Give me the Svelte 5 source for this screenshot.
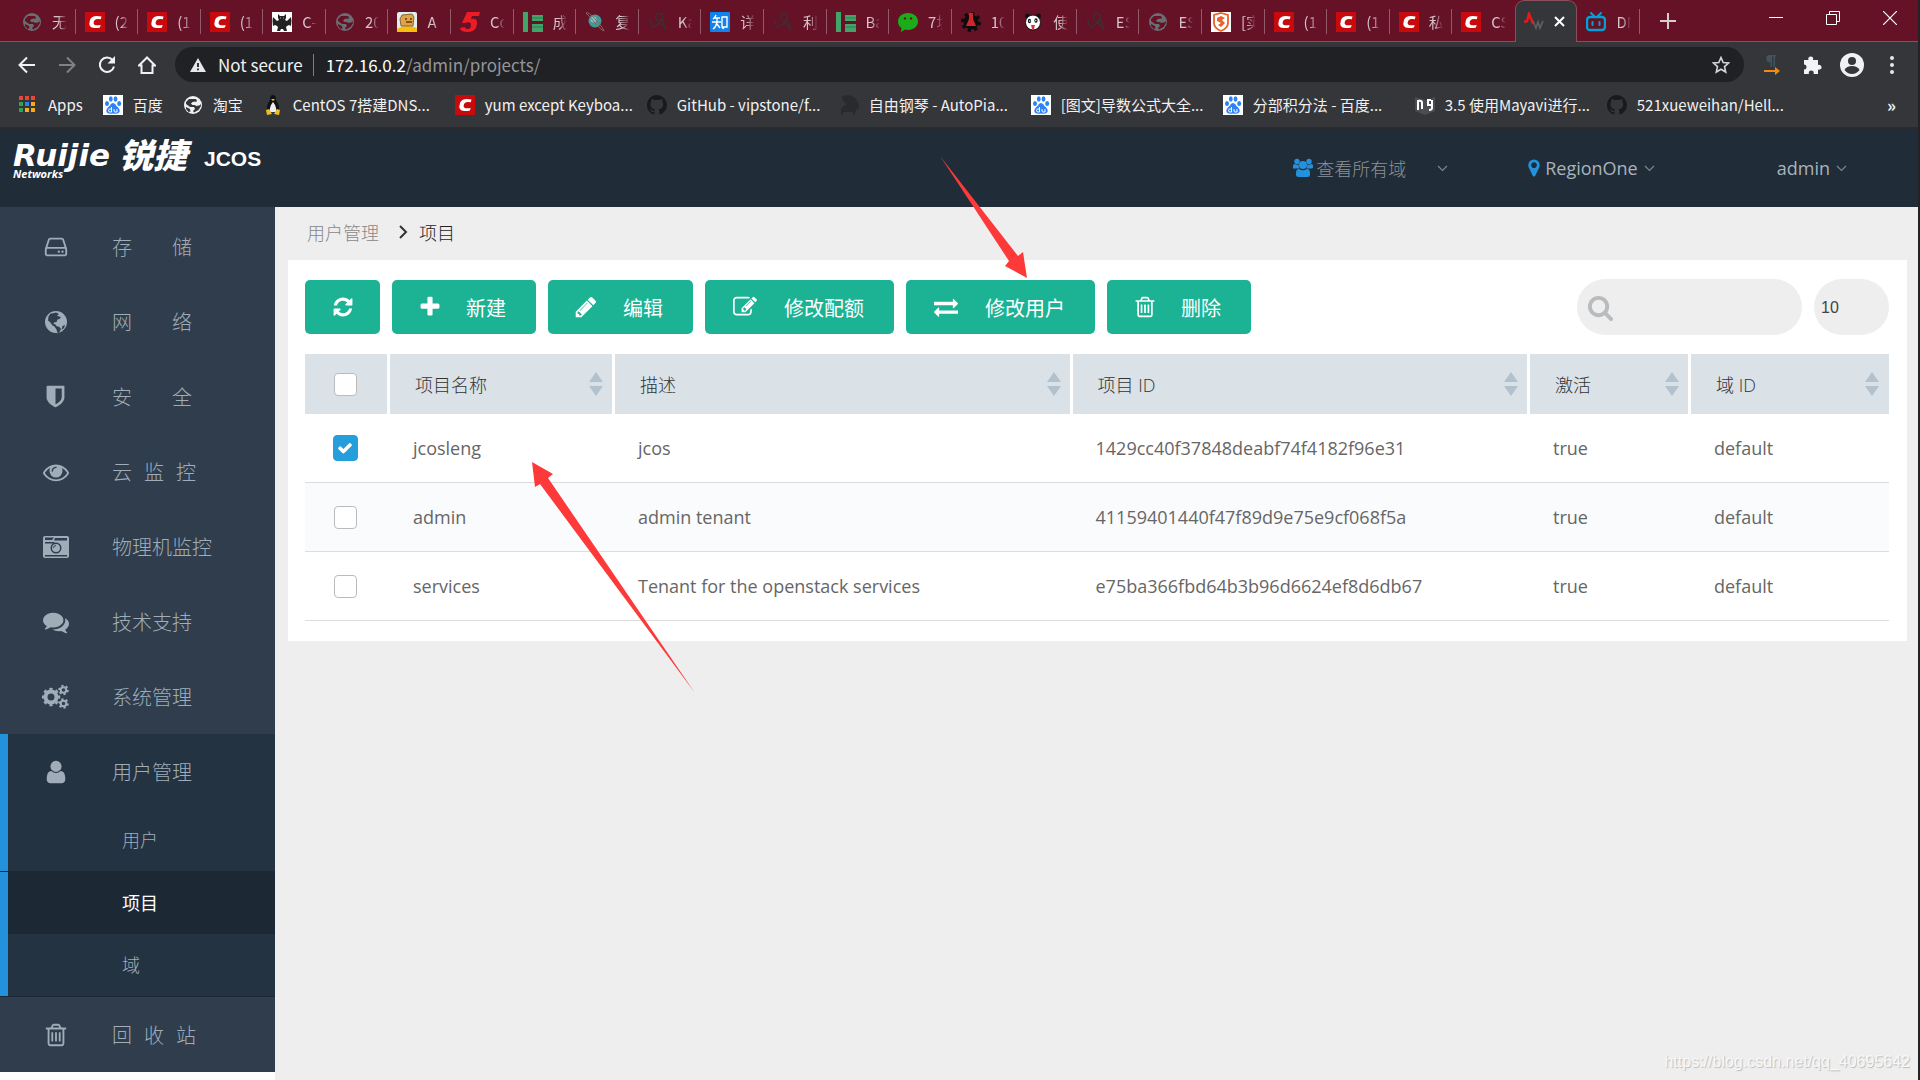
<script>
  const tabs = [
    { icon: 'globe', title: '无标题' },
    { icon: 'csdn', title: '(2条消息)' },
    { icon: 'csdn', title: '(1条消息)' },
    { icon: 'csdn', title: '(1条消息)' },
    { icon: 'bat', title: 'C-免费' },
    { icon: 'globe', title: '2020' },
    { icon: 'robot', title: 'A' },
    { icon: 'five', title: 'Code' },
    { icon: 'bars', title: '成绩' },
    { icon: 'planet', title: '复' },
    { icon: 'sketch', title: 'Kali' },
    { icon: 'zhihu', title: '详解' },
    { icon: 'sketch', title: '利用' },
    { icon: 'bars', title: 'Base' },
    { icon: 'wechat', title: '7块' },
    { icon: 'flask', title: '100' },
    { icon: 'panda', title: '使用' },
    { icon: 'sketch', title: 'ESXi' },
    { icon: 'globe', title: 'ESXi' },
    { icon: 'badge', title: '[实战]' },
    { icon: 'csdn', title: '(1条消息)' },
    { icon: 'csdn', title: '(1条消息)' },
    { icon: 'csdn', title: '私信' },
    { icon: 'csdn', title: 'CSDN' },
    { icon: 'pulse', title: '', active: true },
    { icon: 'bili', title: 'DNS' }
  ];

  const bookmarks = [
    { icon: 'apps', title: 'Apps' },
    { icon: 'baidu', title: '百度' },
    { icon: 'globelight', title: '淘宝' },
    { icon: 'tux', title: 'CentOS 7搭建DNS...', wide: true },
    { icon: 'csdn', title: 'yum except Keyboa...', wide: true },
    { icon: 'github', title: 'GitHub - vipstone/f...', wide: true },
    { icon: 'piano', title: '自由钢琴 - AutoPia...', wide: true },
    { icon: 'baidu', title: '[图文]导数公式大全...', wide: true },
    { icon: 'baidu', title: '分部积分法 - 百度...', wide: true },
    { icon: 'book', title: '3.5 使用Mayavi进行...', wide: true },
    { icon: 'github', title: '521xueweihan/Hell...', wide: true }
  ];

  const menu = [
    { icon: 'hdd', size: 26, label: '存\u2003\u2003储' },
    { icon: 'earth', size: 26, label: '网\u2003\u2003络' },
    { icon: 'shield', size: 25, label: '安\u2003\u2003全' },
    { icon: 'eye', size: 26, label: '云\u2002\u200a监\u2002\u200a控' },
    { icon: 'camera', size: 26, label: '物理机监控' },
    { icon: 'comments', size: 26, label: '技术支持' },
    { icon: 'cogs', size: 27, label: '系统管理' },
    { icon: 'user', size: 26, label: '用户管理', children: ['用户', '项目', '域'] },
    { icon: 'trash', size: 26, label: '回\u2002\u200a收\u2002\u200a站' }
  ];

  const actions = [
    { icon: 'plus', label: '新建', width: 19 },
    { icon: 'pencil', label: '编辑', width: 20 },
    { icon: 'edit', label: '修改配额', width: 24 },
    { icon: 'exchange', label: '修改用户', width: 24 },
    { icon: 'trash', label: '删除', width: 19 }
  ];

  const columns = ['项目名称', '描述', '项目 ID', '激活', '域 ID'];

  let projects = [
    { name: 'jcosleng', desc: 'jcos', id: '1429cc40f37848deabf74f4182f96e31', enabled: 'true', domain: 'default', checked: true },
    { name: 'admin', desc: 'admin tenant', id: '41159401440f47f89d9e75e9cf068f5a', enabled: 'true', domain: 'default', checked: false },
    { name: 'services', desc: 'Tenant for the openstack services', id: 'e75ba366fbd64b3b96d6624ef8d6db67', enabled: 'true', domain: 'default', checked: false }
  ];

  let allChecked = false;
  let search = '';
  let pageSize = '10';
  let current = '项目';

  const toggleAll = () => {
    projects = projects.map((p) => ({ ...p, checked: allChecked }));
  };

  // icons on a 1792 unit grid
  const paths = {
    plus: 'M1600 736v192q0 40-28 68t-68 28h-416v416q0 40-28 68t-68 28h-192q-40 0-68-28t-28-68v-416h-416q-40 0-68-28t-28-68v-192q0-40 28-68t68-28h416v-416q0-40 28-68t68-28h192q40 0 68 28t28 68v416h416q40 0 68 28t28 68z',
    refresh: 'M1639 1056q0 5-1 7-64 268-268 434.5t-478 166.5q-146 0-282.5-55t-243.5-157l-129 129q-19 19-45 19t-45-19-19-45v-448q0-26 19-45t45-19h448q26 0 45 19t19 45-19 45l-137 137q71 66 161 102t187 36q134 0 250-65t186-179q11-17 53-117 8-23 30-23h192q13 0 22.5 9.5t9.5 22.5zm25-800v448q0 26-19 45t-45 19h-448q-26 0-45-19t-19-45 19-45l138-138q-148-137-349-137-134 0-250 65t-186 179q-11 17-53 117-8 23-30 23h-199q-13 0-22.5-9.5t-9.5-22.5v-7q65-268 270-434.5t480-166.5q146 0 284 55.5t245 156.5l130-129q19-19 45-19t45 19 19 45z',
    pencil: 'M491 1536l91-91-235-235-91 91v107h128v128h107zm523-928q0-22-22-22-10 0-17 7l-542 542q-7 7-7 17 0 22 22 22 10 0 17-7l542-542q7-7 7-17zm-54-192l416 416-832 832h-416v-416zm683 96q0 53-37 90l-166 166-416-416 166-165q36-38 90-38 53 0 91 38l235 234q37 39 37 91z',
    edit: 'M888 1184l116-116-152-152-116 116v56h96v96h56zm440-720q-16-16-33 1l-350 350q-17 17-1 33t33-1l350-350q17-17 1-33zm80 594v190q0 119-84.5 203.5t-203.5 84.5h-832q-119 0-203.5-84.5t-84.5-203.5v-832q0-119 84.5-203.5t203.5-84.5h832q63 0 117 25 15 7 18 23 3 17-9 29l-49 49q-14 14-32 8-23-6-45-6h-832q-66 0-113 47t-47 113v832q0 66 47 113t113 47h832q66 0 113-47t47-113v-126q0-13 9-22l64-64q15-15 35-7t20 29zm-96-738l288 288-672 672h-288v-288zm444 132l-92 92-288-288 92-92q28-28 68-28t68 28l152 152q28 28 28 68t-28 68z',
    exchange: 'M1792 1184v192q0 13-9.5 22.5t-22.5 9.5h-1376v192q0 13-9.5 22.5t-22.5 9.5q-12 0-24-10l-319-320q-9-9-9-22 0-14 9-23l320-320q9-9 23-9 13 0 22.5 9.5t9.5 22.5v192h1376q13 0 22.5 9.5t9.5 22.5zm0-544q0 14-9 23l-320 320q-9 9-23 9-13 0-22.5-9.5t-9.5-22.5v-192h-1376q-13 0-22.5-9.5t-9.5-22.5v-192q0-13 9.5-22.5t22.5-9.5h1376v-192q0-14 9-23t23-9q12 0 24 10l319 319q9 9 9 23z',
    trash: 'M704 736v576q0 14-9 23t-23 9h-64q-14 0-23-9t-9-23v-576q0-14 9-23t23-9h64q14 0 23 9t9 23zm256 0v576q0 14-9 23t-23 9h-64q-14 0-23-9t-9-23v-576q0-14 9-23t23-9h64q14 0 23 9t9 23zm256 0v576q0 14-9 23t-23 9h-64q-14 0-23-9t-9-23v-576q0-14 9-23t23-9h64q14 0 23 9t9 23zm128 724v-948h-896v948q0 22 7 40.5t14.5 27 10.5 8.5h832q3 0 10.5-8.5t14.5-27 7-40.5zm-672-1076h448l-48-117q-7-9-17-11h-317q-10 2-17 11zm928 32v64q0 14-9 23t-23 9h-96v948q0 83-47 143.5t-113 60.5h-832q-66 0-113-58.5t-47-141.5v-952h-96q-14 0-23-9t-9-23v-64q0-14 9-23t23-9h309l70-167q15-37 54-63t79-26h320q40 0 79 26t54 63l70 167h309q14 0 23 9t9 23z',
    search: 'M1216 832q0-185-131.5-316.5t-316.5-131.5-316.5 131.5-131.5 316.5 131.5 316.5 316.5 131.5 316.5-131.5 131.5-316.5zm512 832q0 52-38 90t-90 38q-54 0-90-38l-343-342q-179 124-399 124-143 0-273.5-55.5t-225-150-150-225-55.5-273.5 55.5-273.5 150-225 225-150 273.5-55.5 273.5 55.5 225 150 150 225 55.5 273.5q0 220-124 399l343 343q37 37 37 90z',
    check: 'M1671 566q0 40-28 68l-724 724-136 136q-28 28-68 28t-68-28l-136-136-362-362q-28-28-28-68t28-68l136-136q28-28 68-28t68 28l294 295 656-657q28-28 68-28t68 28l136 136q28 28 28 68z',
    hdd: 'M1168 1216q0 33-23.5 56.5t-56.5 23.5-56.5-23.5-23.5-56.5 23.5-56.5 56.5-23.5 56.5 23.5 23.5 56.5zm256 0q0 33-23.5 56.5t-56.5 23.5-56.5-23.5-23.5-56.5 23.5-56.5 56.5-23.5 56.5 23.5 23.5 56.5zm112 160v-320q0-13-9.5-22.5t-22.5-9.5h-1216q-13 0-22.5 9.5t-9.5 22.5v320q0 13 9.5 22.5t22.5 9.5h1216q13 0 22.5-9.5t9.5-22.5zm-1230-480h1180l-157-482q-4-13-16-21.5t-26-8.5h-782q-14 0-26 8.5t-16 21.5zm1358 160v320q0 66-47 113t-113 47h-1216q-66 0-113-47t-47-113v-320q0-25 16-75l197-606q17-53 63-86t101-33h782q55 0 101 33t63 86l197 606q16 50 16 75z',
    shield: 'M1344 960v-640h-448v1137q119-63 213-137 235-184 235-360zm192-768v768q0 86-33.5 170.5t-83 150-118 127.5-126.5 103-121 77.5-89.5 49.5-42.5 20q-12 6-26 6t-26-6q-16-7-42.5-20t-89.5-49.5-121-77.5-126.5-103-118-127.5-83-150-33.5-170.5v-768q0-26 19-45t45-19h1152q26 0 45 19t19 45z',
    eye: 'M1664 960q-152-236-381-353 61 104 61 225 0 185-131.5 316.5t-316.5 131.5-316.5-131.5-131.5-316.5q0-121 61-225-229 117-381 353 133 205 333.5 326.5t434.5 121.5 434.5-121.5 333.5-326.5zm-720-384q0-20-14-34t-34-14q-125 0-214.5 89.5t-89.5 214.5q0 20 14 34t34 14 34-14 14-34q0-86 61-147t147-61q20 0 34-14t14-34zm848 384q0 34-20 69-140 230-376.5 368.5t-499.5 138.5-499.5-139-376.5-368q-20-35-20-69t20-69q140-229 376.5-368t499.5-139 499.5 139 376.5 368q20 35 20 69z',
    comments: 'M1408 768q0 139-94 257t-256.5 186.5-353.5 68.5q-86 0-176-16-124 88-278 128-36 9-86 16h-3q-11 0-20.5-8t-11.5-21q-1-3-1-6.5t.5-6.5 2-6l2.5-5 3.5-5.5 4-5 4.5-5 4-4.5q5-6 23-25t26-29.5 22.5-29 25-38.5 20.5-44q-124-72-195-177t-71-224q0-139 94-257t256.5-186.5 353.5-68.5 353.5 68.5 256.5 186.5 94 257zm384 256q0 120-71 224.5t-195 176.5q10 24 20.5 44t25 38.5 22.5 29 26 29.5 23 25q1 1 4 4.5t4.5 5 4 5 3.5 5.5l2.5 5 2 6 .5 6.5-1 6.5q-3 14-13 22t-22 7q-50-7-86-16-154-40-278-128-90 16-176 16-271 0-472-132 58 4 88 4 161 0 309-45t264-129q125-92 192-212t67-254q0-77-23-152 129 71 204 178t75 230z',
    user: 'M1536 1399q0 109-62.5 187t-150.5 78h-854q-88 0-150.5-78t-62.5-187q0-85 8.5-160.5t31.5-152 58.5-131 94-89 134.5-34.5q131 128 313 128t313-128q76 0 134.5 34.5t94 89 58.5 131 31.5 152 8.5 160.5zm-256-887q0 159-112.5 271.5t-271.5 112.5-271.5-112.5-112.5-271.5 112.5-271.5 271.5-112.5 271.5 112.5 112.5 271.5z',
    marker: 'M1152 640q0-106-75-181t-181-75-181 75-75 181 75 181 181 75 181-75 75-181zm256 0q0 109-33 179l-364 774q-16 33-47.5 52t-67.5 19-67.5-19-46.5-52l-365-774q-33-70-33-179 0-212 150-362t362-150 362 150 150 362z'
  };
</script>

{#snippet icon(name, size)}
  {#if name === 'earth'}
    <svg width={size} height={size} viewBox="0 0 26 26" fill="currentColor" aria-hidden="true">
      <path fill-rule="evenodd" d="M13 2a11 11 0 1 0 0 22a11 11 0 1 0 0-22z M9 4.500l4-1 3 1.500-2 1.500 2 1 2 .5-1.500 2-2 .500-1 2.500-2.500.500-.5 1.500 2 .5 1 1.500 3 1 1.500 2-1.500 3-2 1.500-1-4-2-3-2-1-2.500-3.500-2-1.500.500-4 2-3z M19.500 17l2.500-1-1 3-2.500 2z"/>
    </svg>
  {:else if name === 'camera'}
    <svg width={size} height={size} viewBox="0 0 26 26" fill="currentColor" aria-hidden="true">
      <path fill-rule="evenodd" d="M2 2h22q2 0 2 2v18q0 2-2 2h-22q-2 0-2-2v-18q0-2 2-2z M2 6h7l2-2.500H2z M2 8v1.500h8l2-1.500z M2 21h22v1.500h-22z M24 4h-12l-1 2.500h13z M13 8.500a5.500 5.500 0 1 0 0 11a5.500 5.500 0 1 0 0-11z"/>
      <circle cx="13" cy="14" r="4"/>
      <path d="M10.500 14a2.500 2.500 0 0 1 2.500-2.500" fill="none" stroke="#2f3d4d"/>
    </svg>
  {:else if name === 'cogs'}
    <svg width={size} height={size} viewBox="0 0 27 27" fill="none" stroke="currentColor" aria-hidden="true">
      <circle cx="9" cy="14" r="5.500" stroke-width="4"/>
      <circle cx="9" cy="14" r="8" stroke-width="2.500" pathLength="16" stroke-dasharray="1 1" stroke-dashoffset="0.500"/>
      <circle cx="21.500" cy="7" r="2.800" stroke-width="2"/>
      <circle cx="21.500" cy="7" r="4.400" stroke-width="1.800" pathLength="12" stroke-dasharray="1 1"/>
      <circle cx="21.500" cy="20.500" r="2.800" stroke-width="2"/>
      <circle cx="21.500" cy="20.500" r="4.400" stroke-width="1.800" pathLength="12" stroke-dasharray="1 1"/>
    </svg>
  {:else if name === 'group'}
    <svg width={size} height={size} viewBox="0 0 20 20" fill="currentColor" aria-hidden="true">
      <circle cx="4" cy="3.500" r="2.700"/><circle cx="16" cy="3.500" r="2.700"/>
      <path d="M0 10V8q0-2 1.500-2 3 1.500 4.300.3-.4 2.800.9 4.200H2Q0 11 0 10zM20 10V8q0-2-1.500-2-3 1.500-4.300.3.400 2.800-.9 4.200H18q2 0 2-1z"/>
      <circle cx="10" cy="7" r="4"/>
      <path d="M3 17v-2q0-4 3-4 4 2.500 8 0 3 0 3 4v2q0 2-2.500 2h-9Q3 19 3 17z"/>
    </svg>
  {:else}
    <svg width={size} height={size} viewBox="0 0 1792 1792" fill="currentColor" aria-hidden="true"><path d={paths[name]}/></svg>
  {/if}
{/snippet}

{#snippet favicon(name)}
  <svg class="favicon" width="20" height="20" viewBox="0 0 20 20" aria-hidden="true">
    {#if name === 'globe' || name === 'globelight'}
      <circle cx="10" cy="10" r="9" fill={name === 'globe' ? '#6b6d72' : '#f1f1f1'}/>
      <path d="M8 4h5l1 2-2 2H9.500L8 8.500l1.500 1.500H13l3 .5 1.500-1.500.5 2-2.500 4-4.500 2.500-1-1.500 2-2-1-2H7L3 9V7l3-3z M3 12l4 2 .5 2.500-2 .5L3 14z" fill={name === 'globe' ? '#651126' : '#35363a'}/>
      <path d="M9.500 7l3-.5 1.500 2 3-.5v2l-4 1-2-2H8z" fill={name === 'globe' ? '#6b6d72' : '#f1f1f1'}/>
    {:else if name === 'csdn'}
      <rect width="20" height="20" fill="#c90a0c"/>
      <path d="M16.500 4.500Q7 2.500 5 8q-2.500 8 4.500 8 3 .2 5.500-.6l.6-2.500q-7 1.200-7-2 .3-5 7.200-3.600z" fill="#fff"/>
    {:else if name === 'bat'}
      <rect width="20" height="20" fill="#fff"/>
      <path d="M6 2l2 2h4l2-2v4l-1 2 2 1 4-4q1 4 0 9l-2-1-2 1-1 1 1 4h-3l-1-2h-2l-1 2H5l1-4-1-1-2-1-2 1Q0 9 1 5l4 4 2-1-1-2z" fill="#222"/>
      <path d="M8 5.500h1v1H8zM11 5.500h1v1h-1z" fill="#7c9"/>
    {:else if name === 'robot'}
      <rect width="20" height="20" rx="2" fill="#dff0ef"/>
      <path d="M0 20v-3q4-3 10-3t10 2v4z" fill="#f9bd12"/>
      <path d="M5 3l10-1 2 3-1 9H4L3 7z" fill="#dca548" stroke="#7b4b1d" stroke-width=".8"/>
      <path d="M8 7h2M13 7h2M9 10h6" stroke="#6a3015" stroke-width="1.500"/>
    {:else if name === 'five'}
      <path d="M7 0h13l-1 4h-7l-1 3q7-1 6 5-1 8-9 8-8 0-8-4l5-1q0 2 3 2t3-4-6-2H2z" fill="#ed1c24"/>
    {:else if name === 'bars'}
      <path d="M0 0h5v20H0zM9 3h11v6H9zM9 12h11v8H9z" fill="#42a468"/>
      <path d="M9 6h11M9 15h11" stroke="#2b7f52"/>
    {:else if name === 'planet'}
      <circle cx="10" cy="9" r="6.500" fill="#3f9a9c"/>
      <circle cx="8.500" cy="7.500" r="3" fill="#7cc5c3"/>
      <path d="M1 1q2-2 10 7t8 11q-3-1-8-7T1 1z" fill="none" stroke="#8b6a5d"/>
    {:else if name === 'sketch'}
      <path d="M2 7q0 7 3 8 5-2 8-6 3-5 0-7t-4.500 1 .5 5 5-1l4 11M11 11q5 2 6 6" fill="none" stroke="#412c32" stroke-width="1.600"/>
    {:else if name === 'zhihu'}
      <rect width="20" height="20" rx="1" fill="#1283ea"/>
      <path d="M6 3q-1 3-3 4M4 6h6M7 6v4M2 10h9M7 10q-1 5-4 7M7 12l3 4M12 5h5v10h-3l-1 2v-2h-1z" fill="none" stroke="#fff" stroke-width="1.400"/>
    {:else if name === 'wechat'}
      <path d="M10 1c6 0 10 4 10 8.500S16 18 10 18q-1.500 0-3-.4L3 20l.5-4Q0 13.500 0 9.500C0 5 4 1 10 1z" fill="#1aad19"/>
      <circle cx="7" cy="6.500" r="1.200" fill="#651126"/><circle cx="13" cy="6.500" r="1.200" fill="#651126"/>
    {:else if name === 'flask'}
      <circle cx="10" cy="10" r="7.500" fill="#0c0c0c"/>
      <circle cx="10" cy="10" r="8.500" fill="none" stroke="#0c0c0c" stroke-width="3" pathLength="16" stroke-dasharray="1 1"/>
      <path d="M8 1h4v6l3 7H5l3-7z" fill="#d3242b"/>
    {:else if name === 'panda'}
      <circle cx="4.500" cy="4" r="2.500" fill="#111"/><circle cx="15.500" cy="4" r="2.500" fill="#111"/>
      <circle cx="10" cy="10.500" r="7.500" fill="#fff" stroke="#111"/>
      <ellipse cx="6.500" cy="9" rx="1.600" ry="2.200" fill="#111"/><ellipse cx="13" cy="8.500" rx="1.600" ry="2.200" fill="#111"/>
      <circle cx="6.800" cy="9" r=".7" fill="#fff"/><circle cx="12.800" cy="8.500" r=".7" fill="#fff"/>
      <path d="M8 13h4l-1 4H9z" fill="#e0303a"/>
    {:else if name === 'badge'}
      <rect width="20" height="20" fill="#fff"/>
      <path d="M10 1l7 2v8q0 5-7 8-7-3-7-8V3z" fill="none" stroke="#e8622a" stroke-width="1.800"/>
      <path d="M6 6l4-2 4 2-3 2 3 3-4 4-3-2 3-2-4-2z" fill="#e8622a"/>
    {:else if name === 'pulse'}
      <path d="M0 10l3-1 2-7 3 7 1 3" fill="none" stroke="#e3191b" stroke-width="2.600"/>
      <path d="M9 9l3 7 2-6 2 6 3-7" fill="none" stroke="#5d5e61" stroke-width="1.800"/>
    {:else if name === 'bili'}
      <rect x="1" y="5" width="18" height="13" rx="3" fill="none" stroke="#00a1d6" stroke-width="2.400"/>
      <path d="M5 1l3 3M15 1l-3 3M6.500 10v3M13.500 10v3" stroke="#00a1d6" stroke-width="2" stroke-linecap="round"/>
    {:else if name === 'apps'}
      <path d="M1 1h4v4H1zM7 1h4v4H7zM13 1h4v4h-4z" fill="#e8453c"/>
      <path d="M1 7h4v4H1z" fill="#31a350"/><path d="M7 7h4v4H7z" fill="#2f80ed"/><path d="M13 7h4v4h-4zM13 13h4v4h-4zM7 13h4v4H7z" fill="#f5ab1a"/><path d="M1 13h4v4H1z" fill="#31a350"/>
    {:else if name === 'baidu'}
      <rect width="20" height="20" fill="#fff"/>
      <g fill="#2c83f6"><ellipse cx="4" cy="8.500" rx="2" ry="2.600"/><ellipse cx="7.800" cy="4" rx="1.900" ry="2.700"/><ellipse cx="12.500" cy="4" rx="1.900" ry="2.700"/><ellipse cx="16.200" cy="8.500" rx="2" ry="2.600"/><path d="M10 8q2 0 3.500 3 4 3 3 6-1 2.500-6.500 1.500-5.500 1-6.500-1.500-1-3 3-6Q8 8 10 8z"/></g>
      <path d="M8.500 12v5H7q-1.500-.2-1.500-1.500T7 14h1.500M11 14v2q0 1 1 1h2v-3" fill="none" stroke="#fff"/>
    {:else if name === 'tux'}
      <path d="M10 0q3 0 3 5 4 6 3 11H4Q3 11 7 5q0-5 3-5z" fill="#111"/>
      <path d="M10 7q4 5 3 10H7Q6 12 10 7z" fill="#eee"/>
      <path d="M8 4h4l-2 2zM3 15l3-1 3 5-5 1zM17 15l-3-1-3 5 5 1z" fill="#f3bf1b"/>
    {:else if name === 'github'}
      <path d="M10 0a10 10 0 0 0-3.200 19.500c.5.100.7-.2.700-.5v-1.900c-2.800.6-3.400-1.200-3.400-1.200-.4-1.100-1.100-1.500-1.100-1.500-.9-.6.1-.6.1-.6 1 .1 1.500 1 1.500 1 .9 1.500 2.300 1.100 2.900.8.100-.6.400-1.100.6-1.300-2.200-.3-4.600-1.100-4.600-5 0-1.100.4-2 1-2.700-.1-.2-.4-1.200.1-2.600 0 0 .8-.3 2.800 1a9.500 9.500 0 0 1 5 0c1.900-1.300 2.700-1 2.700-1 .6 1.400.2 2.400.1 2.600.7.700 1 1.600 1 2.700 0 3.900-2.300 4.700-4.600 5 .4.300.7.900.7 1.900V19c0 .3.200.6.700.5A10 10 0 0 0 10 0z" fill="#191a1c"/>
    {:else if name === 'piano'}
      <path d="M3 1q9-2 13 2t4 10q-2 2-7 2h4v2H2v-2q0-3 6-6-4-1-5-8zM2 17h2v3H2zM14 17h2v3h-2z" fill="#292a2d"/>
    {:else if name === 'book'}
      <path d="M0 2l10 3 10-3v14l-10 4-10-4z" fill="#4b4c50"/>
      <path d="M3 15V6q4-1 4 2v6M17 5v8q0 2-3 2M16 5h-3v5h3" fill="none" stroke="#fff" stroke-width="2"/>
    {/if}
  </svg>
{/snippet}

{#snippet chevron()}
  <svg class="chevron" width="11" height="7" viewBox="0 0 11 7" fill="none" stroke="currentColor" stroke-width="1.200" aria-hidden="true"><path d="M1 1l4.500 4.500L10 1"/></svg>
{/snippet}

<div class="screen">
  <div class="browser">
    <div class="tabstrip">
      <div class="tabs">
        {#each tabs as tab, i}
          <div class="tab" class:active={tab.active} class:before={tabs[i + 1]?.active}>
            {@render favicon(tab.icon)}
            {#if tab.active}
              <button class="close" aria-label="Close tab">
                <svg width="11" height="11" viewBox="0 0 11 11" stroke="#fff" stroke-width="2"><path d="M1 1l9 9M10 1l-9 9"/></svg>
              </button>
            {:else}
              <span class="tab-title">{tab.title}</span>
            {/if}
          </div>
        {/each}
      </div>
      <button class="newtab" aria-label="New tab">
        <svg width="16" height="16" viewBox="0 0 16 16" stroke="#d9cbd0" stroke-width="2"><path d="M8 0v16M0 8h16"/></svg>
      </button>
      <div class="window-buttons">
        <button aria-label="Minimize"><svg width="14" height="14" viewBox="0 0 14 14" stroke="#fff"><path d="M0 6.500h14"/></svg></button>
        <button aria-label="Restore"><svg width="14" height="14" viewBox="0 0 14 14" fill="none" stroke="#fff"><path d="M.5 3.500h10v10H.5zM3.500 3V.5h10v10H11"/></svg></button>
        <button aria-label="Close"><svg width="14" height="14" viewBox="0 0 14 14" stroke="#fff" stroke-width="1.200"><path d="M0 0l14 14M14 0L0 14"/></svg></button>
      </div>
    </div>

    <div class="toolbar">
      <button class="tool" aria-label="Back"><svg width="18" height="18" viewBox="0 0 18 18" fill="none" stroke="#f1f1f1" stroke-width="2"><path d="M17 9H2M9 1.500L1.500 9 9 16.500"/></svg></button>
      <button class="tool" aria-label="Forward"><svg width="18" height="18" viewBox="0 0 18 18" fill="none" stroke="#808185" stroke-width="2"><path d="M1 9h15M9 1.500L16.500 9 9 16.500"/></svg></button>
      <button class="tool" aria-label="Reload"><svg width="18" height="18" viewBox="0 0 18 18" fill="none" stroke="#f1f1f1" stroke-width="2"><path d="M16 10.500A7.200 7.200 0 1 1 14.500 4"/><path d="M17 0v7.500H9.500z" fill="#f1f1f1" stroke="none"/></svg></button>
      <button class="tool" aria-label="Home"><svg width="18" height="18" viewBox="0 0 18 18" fill="none" stroke="#f1f1f1" stroke-width="2"><path d="M9 1.500L1 9.500h2.500V17h11V9.500H17z"/></svg></button>
      <div class="omnibox">
        <svg width="16" height="14" viewBox="0 0 16 14" aria-hidden="true"><path d="M8 0l8 14H0z" fill="#e8e8e8"/><path d="M8 5v4M8 10.500v1.800" stroke="#202124" stroke-width="1.800"/></svg>
        <span class="secure">Not secure</span>
        <span class="url">172.16.0.2<span class="path">/admin/projects/</span></span>
        <button class="star" aria-label="Bookmark this page"><svg width="18" height="18" viewBox="0 0 18 18" fill="none" stroke="#d5d6d8" stroke-width="1.600"><path d="M9 1.500l2.200 5 5.300.5-4 3.600 1.200 5.400L9 13.200 4.300 16l1.200-5.400-4-3.600 5.300-.5z"/></svg></button>
      </div>
      <button class="tool" aria-label="Extension"><svg width="18" height="20" viewBox="0 0 18 20"><path d="M6 0h7v1.500h-1V12h-1.500V1.500H9V12H7.500V7A3.500 3.500 0 0 1 6 0z" fill="#40545e"/><path d="M1 16h12" stroke="#f28b0c" stroke-width="2"/><path d="M12 12l5 4-5 4z" fill="#f28b0c"/></svg></button>
      <button class="tool" aria-label="Extensions"><svg width="20" height="20" viewBox="0 0 20 20"><path d="M2 5h4.500a2.500 2.500 0 1 1 4.500 0H16v5a2.500 2.500 0 1 1 0 4.500V19h-4.500a2.500 2.500 0 1 0-4.500 0H2v-4.500a2.500 2.500 0 1 0 0-5z" fill="#f1f3f4"/></svg></button>
      <button class="tool" aria-label="Profile"><svg width="24" height="24" viewBox="0 0 24 24"><circle cx="12" cy="12" r="12" fill="#eff1f3"/><circle cx="12" cy="8" r="4" fill="#35363a"/><path d="M4.500 17q2-4 7.500-4t7.500 4q-3 4-7.500 4t-7.500-4z" fill="#35363a"/></svg></button>
      <button class="tool" aria-label="Menu"><svg width="4" height="18" viewBox="0 0 4 18" fill="#e8e8e8"><circle cx="2" cy="2" r="2"/><circle cx="2" cy="9" r="2"/><circle cx="2" cy="16" r="2"/></svg></button>
    </div>

    <div class="bookmarks">
      {#each bookmarks as mark}
        <a class="bookmark" class:wide={mark.wide} href="#bookmark">{@render favicon(mark.icon)}<span>{mark.title}</span></a>
      {/each}
      <button class="more" aria-label="More bookmarks">»</button>
    </div>
  </div>

  <header class="topbar">
    <div class="brand">
      <div class="logo">
        <div class="logo-words"><span class="ruijie">Ruijie</span><span class="cn">锐捷</span></div>
        <div class="networks">Networks</div>
      </div>
      <span class="product">JCOS</span>
    </div>
    <nav class="top-menus">
      <button class="top-menu domains"><span class="blue">{@render icon('group', 20)}</span><span class="grey">查看所有域</span>{@render chevron()}</button>
      <button class="top-menu region"><span class="blue">{@render icon('marker', 20)}</span><span>RegionOne</span>{@render chevron()}</button>
      <button class="top-menu"><span>admin</span>{@render chevron()}</button>
    </nav>
  </header>

  <div class="layout">
    <aside class="side">
      <ul class="menu">
        {#each menu as item}
          <li class:open={item.children}>
            <a class="item" href="#menu"><span class="item-icon">{@render icon(item.icon, item.size)}</span><span>{item.label}</span></a>
            {#if item.children}
              <ul class="submenu">
                {#each item.children as child}
                  <li class:current={child === current}><a class="subitem" href="#submenu">{child}</a></li>
                {/each}
              </ul>
            {/if}
          </li>
        {/each}
      </ul>
    </aside>

    <main>
      <div class="crumbs">
        <a href="#users">用户管理</a>
        <svg width="9" height="14" viewBox="0 0 9 14" fill="none" stroke="#333" stroke-width="2" aria-hidden="true"><path d="M1 1l6 6-6 6"/></svg>
        <span>项目</span>
      </div>

      <section class="panel">
        <div class="actions">
          <button class="btn refresh" aria-label="刷新">{@render icon('refresh', 22)}</button>
          {#each actions as action}
            <button class="btn">
              <span class="btn-icon" style="width: {action.width}px">{@render icon(action.icon, 24)}</span>
              <span>{action.label}</span>
            </button>
          {/each}
          <label class="search">
            {@render icon('search', 27)}
            <input type="text" aria-label="搜索" bind:value={search} />
          </label>
          <select aria-label="每页数量" bind:value={pageSize}>
            <option>10</option>
            <option>20</option>
            <option>50</option>
          </select>
        </div>

        <table>
          <colgroup>
            <col class="c-check" /><col class="c-name" /><col /><col /><col class="c-enabled" /><col class="c-domain" />
          </colgroup>
          <thead>
            <tr>
              <th class="check-cell">
                <label class="check"><input type="checkbox" aria-label="全选" bind:checked={allChecked} on:change={toggleAll} />{@render icon('check', 16)}</label>
              </th>
              {#each columns as column}
                <th>
                  <div class="th">
                    <span>{column}</span>
                    <svg width="14" height="24" viewBox="0 0 14 24" fill="#b1c2ce" aria-hidden="true"><path d="M7 0l7 10H0zM7 24l7-10H0z"/></svg>
                  </div>
                </th>
              {/each}
            </tr>
          </thead>
          <tbody>
            {#each projects as project}
              <tr>
                <td class="check-cell">
                  <label class="check"><input type="checkbox" aria-label={project.name} bind:checked={project.checked} />{@render icon('check', 16)}</label>
                </td>
                <td>{project.name}</td>
                <td>{project.desc}</td>
                <td>{project.id}</td>
                <td>{project.enabled}</td>
                <td>{project.domain}</td>
              </tr>
            {/each}
          </tbody>
        </table>
      </section>
    </main>
  </div>

  <!-- red pointers drawn over the page -->
  <svg class="pointer to-button" width="90" height="124" viewBox="0 0 90 124" aria-hidden="true"><path d="M0 0L69 105 65 110 87 122 83 96 78 100z" fill="#fd3a39"/></svg>
  <svg class="pointer to-row" width="164" height="232" viewBox="0 0 164 232" aria-hidden="true"><path d="M0 0L21 12 16 16 163 231 8 22 3 25z" fill="#fd3a39"/></svg>
  <div class="watermark">https://blog.csdn.net/qq_40695642</div>
</div>

<style>
  :global(body) {
    margin: 0;
    background: #fff;
  }

  .screen {
    position: relative;
    display: flex;
    flex-direction: column;
    box-sizing: border-box;
    min-height: 100vh;
    border-right: 2px solid #222326;
    font-family: "Open Sans", "Noto Sans CJK SC", sans-serif;
    font-size: 17px;
    overflow: hidden;
  }

  button {
    display: flex;
    align-items: center;
    justify-content: center;
    padding: 0;
    border: 0;
    background: none;
    color: inherit;
    font: inherit;
  }

  a {
    color: inherit;
    text-decoration: none;
  }

  svg {
    display: block;
    flex: none;
  }

  ul {
    margin: 0;
    padding: 0;
    list-style: none;
  }

  /* browser */
  .browser {
    background: #35363a;
    border-bottom: 2px solid #2a2b2f;
    color: #f1f1f1;
    font-family: "Noto Sans CJK SC", sans-serif;
  }

  .tabstrip {
    display: flex;
    height: 41px;
    padding-left: 13px;
    background: #651126;
    border-bottom: 1px solid #8c4d5e;
  }

  .tabs {
    display: flex;
    flex: 1;
    min-width: 0;
  }

  .tab {
    display: flex;
    flex: 1 1 0;
    align-items: center;
    gap: 10px;
    min-width: 0;
    height: 25px;
    margin-top: 9px;
    padding: 0 8px 0 9px;
    box-sizing: border-box;
    border-right: 1px solid #935a68;
    font-size: 15px;
    line-height: 22px;
    color: #d5c5ca;
  }

  .tab.before {
    border-right-color: transparent;
  }

  .tab.active {
    height: 42px;
    margin-top: 0;
    padding: 0 8px;
    border: 1px solid #8c4d5e;
    border-bottom: 0;
    border-radius: 9px 9px 0 0;
    background: #35363a;
  }

  .tab-title {
    flex: 1;
    min-width: 0;
    overflow: hidden;
    white-space: nowrap;
    mask-image: linear-gradient(90deg, #000 40%, transparent);
  }

  .newtab {
    width: 55px;
  }

  .window-buttons {
    display: flex;
    height: 36px;
    padding-left: 52px;
  }

  .window-buttons button {
    width: 57px;
  }

  .toolbar {
    display: flex;
    align-items: center;
    height: 35px;
    padding: 5px 6px 0 7px;
  }

  .tool {
    width: 40px;
    height: 35px;
  }

  .omnibox {
    display: flex;
    flex: 1;
    align-items: center;
    height: 35px;
    margin: 0 8px;
    padding: 0 14px 0 15px;
    border-radius: 18px;
    background: #202124;
    line-height: 22px;
  }

  .secure {
    margin-left: 12px;
    padding-right: 10px;
    border-right: 1px solid #7c7d81;
  }

  .url {
    flex: 1;
    margin-left: 12px;
    color: #fff;
  }

  .path {
    color: #94969a;
  }

  .bookmarks {
    display: flex;
    align-items: center;
    gap: 20px;
    height: 45px;
    padding: 0 22px 0 18px;
    font-size: 15px;
    line-height: 22px;
  }

  .bookmark {
    display: flex;
    align-items: center;
    gap: 10px;
    white-space: nowrap;
  }

  .bookmark.wide {
    width: 172px;
  }

  .more {
    margin-left: auto;
    font-size: 17px;
    font-weight: 700;
  }

  /* top bar */
  .topbar {
    display: flex;
    justify-content: space-between;
    height: 78px;
    background: #202c37;
    color: #a9b3bd;
  }

  .brand {
    display: flex;
    padding: 14px 0 0 13px;
    color: #fff;
    font-style: italic;
    font-weight: 700;
  }

  .logo-words {
    display: flex;
    align-items: center;
    height: 25px;
    line-height: 25px;
  }

  .ruijie {
    width: 106px;
    font-family: "DejaVu Sans", sans-serif;
    font-size: 31px;
  }

  .cn {
    font-size: 34px;
    font-weight: 900;
  }

  .networks {
    font-size: 11px;
    line-height: 12px;
  }

  .product {
    margin-left: 17px;
    font-family: "Liberation Sans", sans-serif;
    font-size: 21px;
    font-style: normal;
    line-height: 32px;
  }

  .top-menus {
    display: flex;
    align-items: center;
    padding-right: 71px;
  }

  .top-menu {
    gap: 6px;
    font-size: 18px;
  }

  .chevron {
    color: #7d8790;
  }

  .domains {
    gap: 3px;
    margin-right: 76px;
  }

  .domains .grey {
    margin-right: 28px;
    color: #8d9195;
    font-weight: 300;
  }

  .region {
    margin-right: 122px;
  }

  .region .blue {
    margin-right: -5px;
  }

  .blue {
    color: #2391db;
  }

  /* side menu */
  .layout {
    display: flex;
    flex: 1;
  }

  .side {
    width: 275px;
    background: #fff;
    color: #a0adb9;
  }

  .menu {
    padding-top: 2px;
    background: #2f3d4d;
  }

  .item {
    display: flex;
    align-items: center;
    gap: 43px;
    height: 75px;
    padding-left: 42px;
    font-size: 20px;
    font-weight: 300;
    white-space: nowrap;
  }

  .item-icon {
    display: flex;
    justify-content: center;
    width: 27px;
  }

  .open {
    border-bottom: 1px solid #1c2833;
    background: #243342;
    box-shadow: inset 8px 0 #2391db;
  }

  .subitem {
    display: block;
    height: 62px;
    padding-left: 122px;
    font-size: 18px;
    font-weight: 300;
    line-height: 62px;
  }

  .current {
    border-top: 1px solid #1c2833;
    background: linear-gradient(#1c2833, #1c2833) no-repeat 8px 0;
    color: #fff;
  }

  .current .subitem {
    font-weight: 400;
  }

  /* content */
  main {
    flex: 1;
    min-width: 0;
    background: #eee;
  }

  .crumbs {
    display: flex;
    align-items: center;
    height: 50px;
    padding: 0 0 3px 32px;
    color: #222;
    font-size: 18px;
    font-weight: 300;
  }

  .crumbs a {
    color: #888;
  }

  .crumbs svg {
    margin: 0 11px 0 20px;
  }

  .panel {
    margin: 0 11px 0 13px;
    padding: 20px 18px 20px 17px;
    background: #fff;
  }

  .actions {
    display: flex;
    align-items: center;
    gap: 12px;
    height: 54px;
    margin-bottom: 20px;
  }

  .btn {
    gap: 27px;
    height: 54px;
    padding: 0 30px 0 28px;
    border-radius: 5px;
    background: #1bb394;
    color: #fff;
    font-size: 20px;
    white-space: nowrap;
  }

  .btn.refresh {
    width: 75px;
    padding: 0;
  }

  .btn-icon {
    display: flex;
    justify-content: center;
  }

  .search {
    display: flex;
    align-items: center;
    gap: 8px;
    box-sizing: border-box;
    width: 225px;
    height: 56px;
    margin-left: auto;
    padding: 0 20px 0 10px;
    border-radius: 28px;
    background: #eee;
    color: #b9bcbe;
  }

  .search input {
    flex: 1;
    min-width: 0;
    border: 0;
    outline: 0;
    background: none;
    font: inherit;
  }

  select {
    width: 75px;
    height: 56px;
    padding: 0 7px;
    border: 0;
    border-radius: 28px;
    background: #eee;
    color: #444;
    font-family: "Liberation Sans", sans-serif;
    font-size: 16px;
    appearance: none;
  }

  table {
    width: 100%;
    border-collapse: collapse;
    table-layout: fixed;
    color: #666;
    font-size: 18px;
  }

  .c-check {
    width: 85px;
  }

  .c-name {
    width: 225px;
  }

  .c-enabled {
    width: 161px;
  }

  .c-domain {
    width: 198px;
  }

  th {
    height: 60px;
    padding: 0 12px 0 25px;
    background: #dae1e7;
    box-shadow: inset -3px 0 #fff;
    color: #333;
    font-weight: 300;
    text-align: left;
  }

  th:last-child {
    padding-right: 10px;
    box-shadow: none;
  }

  .th {
    display: flex;
    align-items: center;
    justify-content: space-between;
  }

  td {
    height: 68px;
    padding: 0 0 0 23px;
    border-bottom: 1px solid #ddd;
  }

  tbody tr:nth-child(even) {
    background: #fafbfd;
  }

  .check-cell {
    padding: 0 5px 0 0;
  }

  .check {
    display: flex;
    align-items: center;
    justify-content: center;
    box-sizing: border-box;
    width: 23px;
    height: 23px;
    margin: 0 auto;
    border: 1px solid #bbb;
    border-radius: 4px;
    background: #fff;
    color: #fff;
  }

  .check:has(input:checked) {
    width: 25px;
    height: 26px;
    border-color: #249fdb;
    background: #249fdb;
  }

  .check input {
    position: absolute;
    opacity: 0;
  }

  /* overlays */
  .pointer {
    position: absolute;
    pointer-events: none;
  }

  .to-button {
    top: 156px;
    left: 940px;
  }

  .to-row {
    top: 462px;
    left: 532px;
  }

  .watermark {
    position: absolute;
    right: 8px;
    bottom: 9px;
    color: #f8f8f8;
    font-family: "Liberation Sans", sans-serif;
    font-size: 16px;
    text-shadow: 1px 1px 1px #bbb;
  }
</style>
